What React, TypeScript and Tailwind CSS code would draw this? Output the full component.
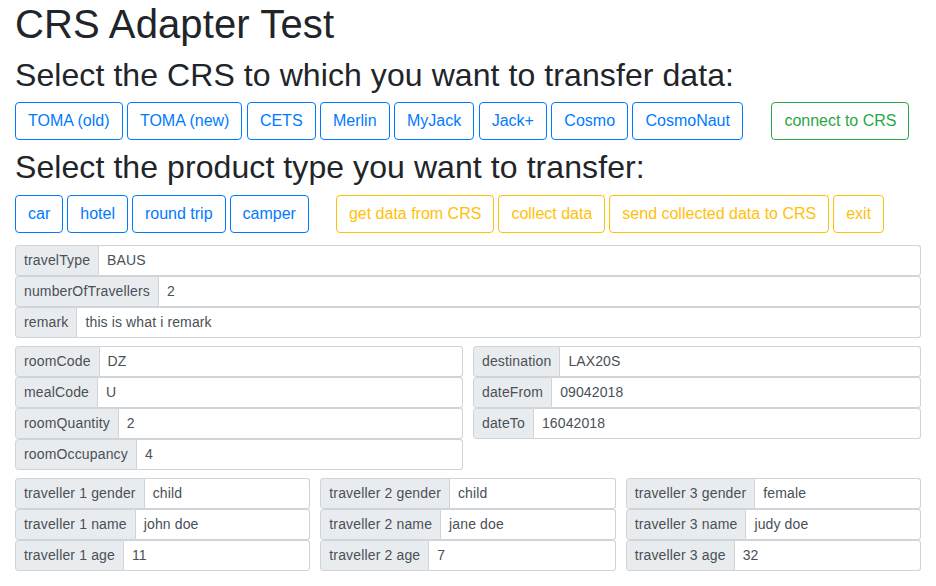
import React from "react";

type BtnProps = { label: string; tone: "blue" | "green" | "yellow"; className?: string };

function Btn({ label, tone, className = "" }: BtnProps) {
  const toneCls =
    tone === "blue"
      ? "text-[#007bff] border-[#007bff]"
      : tone === "green"
      ? "text-[#28a745] border-[#28a745]"
      : "text-[#ffc107] border-[#ffc107]";
  return (
    <button
      className={`h-[38px] px-[12px] py-[6px] border rounded-[4px] bg-white text-[16px] leading-[24px] whitespace-nowrap ${toneCls} ${className}`}
    >
      {label}
    </button>
  );
}

function Field({ label, value }: { label: string; value: string }) {
  return (
    <div className="flex h-[31px] w-full">
      <span className="flex items-center px-[8px] text-[14px] leading-[21px] tracking-[0.15px] bg-[#e9ecef] border border-[#ced4da] rounded-l-[3.2px] text-[#495057] whitespace-nowrap">
        {label}
      </span>
      <div className="flex flex-1 min-w-0 items-center px-[8px] text-[14px] leading-[21px] tracking-[0.12px] bg-white border border-l-0 border-[#ced4da] rounded-r-[3.2px] text-[#495057] whitespace-nowrap">
        {value}
      </div>
    </div>
  );
}

function Col({ items }: { items: [string, string][] }) {
  return (
    <div className="flex flex-col">
      {items.map(([l, v]) => (
        <Field key={l} label={l} value={v} />
      ))}
    </div>
  );
}

export default function App() {
  return (
    <div
      className="w-[936px] min-h-[586px] bg-white px-[15px] text-[#212529]"
      style={{ fontFamily: '"Liberation Sans", Arial, sans-serif' }}
    >
      <h1 className="text-[40px] leading-[48px] tracking-[0.12px] font-normal mb-[8px]">CRS Adapter Test</h1>
      <h2 className="text-[32px] leading-[38.4px] tracking-[0.08px] font-normal mb-[8px]">
        Select the CRS to which you want to transfer data:
      </h2>
      <div className="flex gap-[4.45px] mb-[8px]">
        <Btn label="TOMA (old)" tone="blue" />
        <Btn label="TOMA (new)" tone="blue" />
        <Btn label="CETS" tone="blue" />
        <Btn label="Merlin" tone="blue" />
        <Btn label="MyJack" tone="blue" />
        <Btn label="Jack+" tone="blue" />
        <Btn label="Cosmo" tone="blue" />
        <Btn label="CosmoNaut" tone="blue" />
        <Btn label="connect to CRS" tone="green" className="ml-[24px]" />
      </div>
      <h2 className="text-[32px] leading-[38.4px] tracking-[0.08px] font-normal mb-[8px]">
        Select the product type you want to transfer:
      </h2>
      <div className="flex gap-[4px] mb-[12px]">
        <Btn label="car" tone="blue" />
        <Btn label="hotel" tone="blue" />
        <Btn label="round trip" tone="blue" />
        <Btn label="camper" tone="blue" />
        <Btn label="get data from CRS" tone="yellow" className="ml-[23px]" />
        <Btn label="collect data" tone="yellow" />
        <Btn label="send collected data to CRS" tone="yellow" />
        <Btn label="exit" tone="yellow" />
      </div>

      <div className="mb-[8px]">
        <Col
          items={[
            ["travelType", "BAUS"],
            ["numberOfTravellers", "2"],
            ["remark", "this is what i remark"],
          ]}
        />
      </div>

      <div className="grid grid-cols-2 gap-x-[10px] items-start mb-[8px]">
        <Col
          items={[
            ["roomCode", "DZ"],
            ["mealCode", "U"],
            ["roomQuantity", "2"],
            ["roomOccupancy", "4"],
          ]}
        />
        <Col
          items={[
            ["destination", "LAX20S"],
            ["dateFrom", "09042018"],
            ["dateTo", "16042018"],
          ]}
        />
      </div>

      <div className="grid grid-cols-3 gap-x-[10px] items-start">
        <Col
          items={[
            ["traveller 1 gender", "child"],
            ["traveller 1 name", "john doe"],
            ["traveller 1 age", "11"],
          ]}
        />
        <Col
          items={[
            ["traveller 2 gender", "child"],
            ["traveller 2 name", "jane doe"],
            ["traveller 2 age", "7"],
          ]}
        />
        <Col
          items={[
            ["traveller 3 gender", "female"],
            ["traveller 3 name", "judy doe"],
            ["traveller 3 age", "32"],
          ]}
        />
      </div>
    </div>
  );
}
